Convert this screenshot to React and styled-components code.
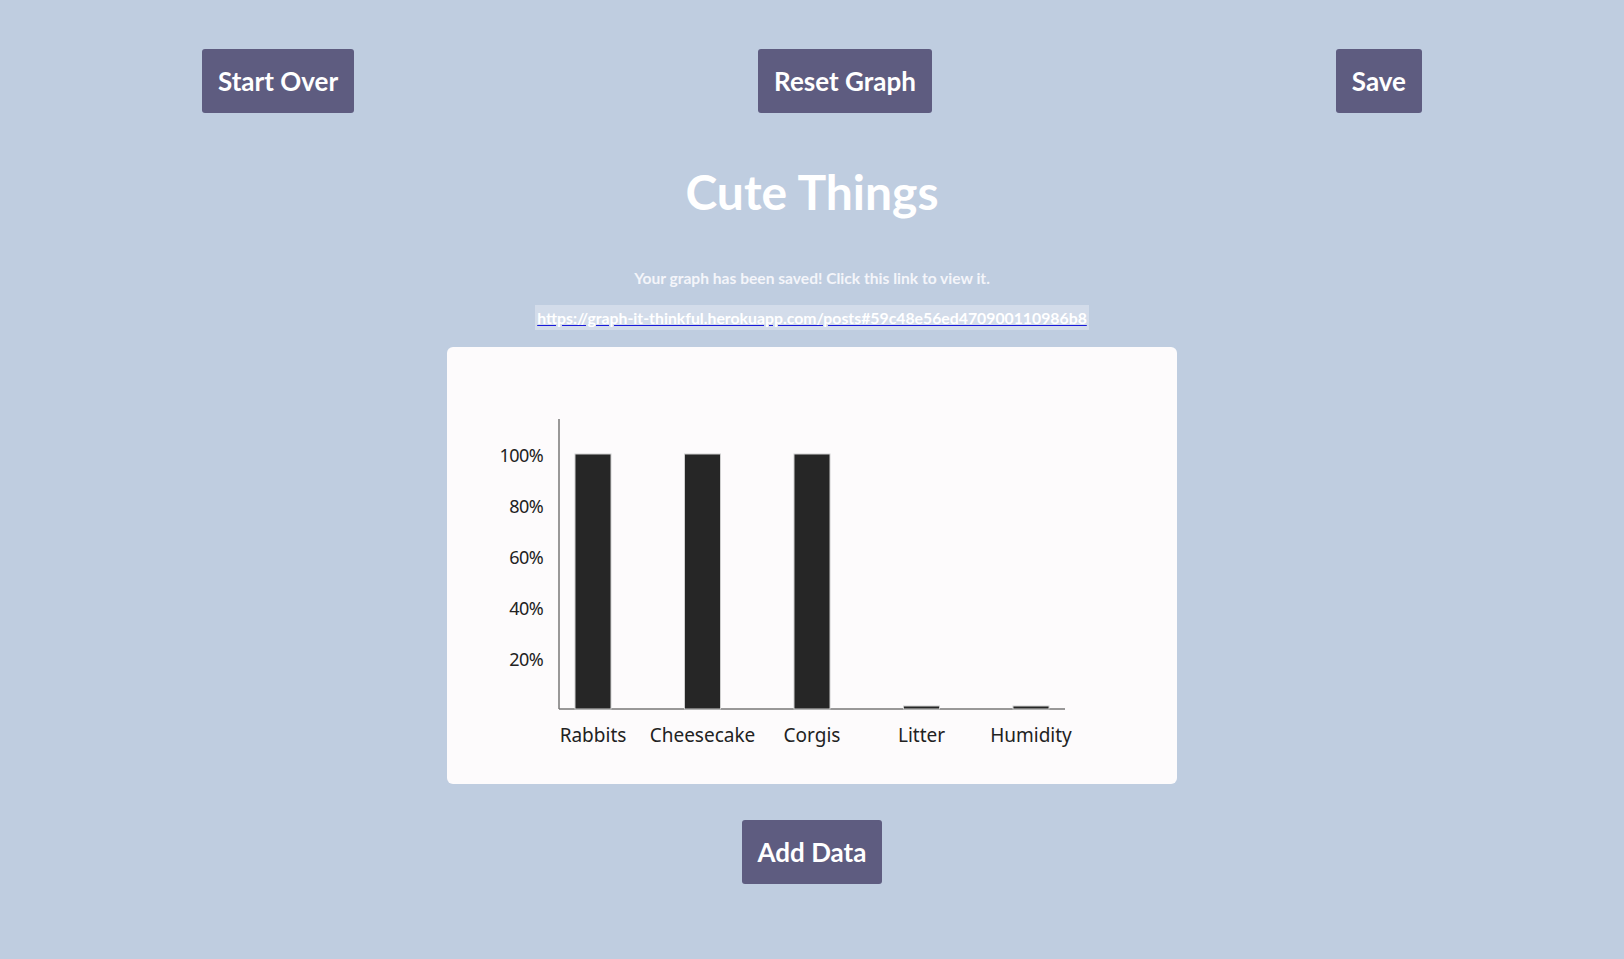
import React from 'react';
import styled, { createGlobalStyle } from 'styled-components';

const GlobalStyle = createGlobalStyle`
  body {
    margin: 0;
    background-color: #bfcde0;
    font-family: Lato, "Liberation Sans", sans-serif;
  }
`;

const data = [
  { label: 'Rabbits', value: 100 },
  { label: 'Cheesecake', value: 100 },
  { label: 'Corgis', value: 100 },
  { label: 'Litter', value: 1 },
  { label: 'Humidity', value: 1 },
];

const ticks = [100, 80, 60, 40, 20];

// chart geometry, in svg units
const AXIS_X = 112;
const AXIS_TOP = 72;
const BASE_Y = 362;
const FULL = 255;
const BAR_W = 36;
const STEP = 109.5;
const FIRST_BAR = 128;

const Graph = () => (
  <ChartSvg width="730" height="437" viewBox="0 0 730 437">
    <line x1={AXIS_X} y1={AXIS_TOP} x2={AXIS_X} y2={BASE_Y} className="axis" />
    <line x1={AXIS_X} y1={BASE_Y} x2={618} y2={BASE_Y} className="axis" />
    {ticks.map(t => (
      <text key={t} x={96} y={BASE_Y - (FULL * t) / 100 + 8} className="tick">
        {t}%
      </text>
    ))}
    {data.map((d, i) => {
      const x = FIRST_BAR + i * STEP;
      const h = Math.max((FULL * d.value) / 100, 3);
      return (
        <g key={d.label}>
          <rect x={x} y={BASE_Y - h} width={BAR_W} height={h} className="bar" />
          <text x={x + BAR_W / 2} y={BASE_Y + 33} className="label">
            {d.label}
          </text>
        </g>
      );
    })}
  </ChartSvg>
);

const App = () => (
  <Page>
    <GlobalStyle />
    <TopBar>
      <Button>Start Over</Button>
      <Button>Reset Graph</Button>
      <Button>Save</Button>
    </TopBar>
    <Title>Cute Things</Title>
    <SavedNote>Your graph has been saved! Click this link to view it.</SavedNote>
    <SavedLink href="#">
      https://graph-it-thinkful.herokuapp.com/posts#59c48e56ed470900110986b8
    </SavedLink>
    <Card>
      <Graph />
    </Card>
    <Button>Add Data</Button>
  </Page>
);

export default App;

const Page = styled.div`
  display: flex;
  flex-direction: column;
  align-items: center;
  min-height: 959px;
  padding-top: 49px;
  box-sizing: border-box;
`;

const TopBar = styled.div`
  width: 100%;
  display: flex;
  justify-content: space-around;
  align-items: center;
`;

const Button = styled.button`
  font-family: Lato, "Liberation Sans", sans-serif;
  font-weight: 700;
  font-size: 26px;
  line-height: 34px;
  color: #ffffff;
  background-color: #5e5c80;
  border: none;
  border-radius: 3px;
  padding: 15px 16px;
  cursor: pointer;
`;

const Title = styled.h1`
  margin: 50px 0 0;
  font-size: 48px;
  line-height: 58px;
  font-weight: 700;
  color: #ffffff;
`;

const SavedNote = styled.p`
  margin: 48px 0 0;
  font-size: 15.6px;
  line-height: 18px;
  font-weight: 700;
  color: #f4f5fa;
`;

const SavedLink = styled.a`
  margin-top: 18px;
  padding: 3px 2px;
  font-size: 15.8px;
  line-height: 19px;
  font-weight: 700;
  color: #ffffff;
  background-color: #d3dcea;
  text-decoration: underline;
  text-decoration-color: #1a1adb;
`;

const Card = styled.div`
  margin: 17px 0 36px;
  width: 730px;
  height: 437px;
  background-color: #fdfbfc;
  border-radius: 6px;
`;

const ChartSvg = styled.svg`
  display: block;
  .axis {
    stroke: #777777;
    stroke-width: 1.5;
  }
  .bar {
    fill: #262626;
    stroke: #cfcfcf;
    stroke-width: 1;
  }
  .tick {
    font-family: "Noto Sans", "Open Sans", sans-serif;
    font-size: 18px;
    letter-spacing: -0.6px;
    fill: #222222;
    text-anchor: end;
  }
  .label {
    font-family: "Noto Sans", "Open Sans", sans-serif;
    font-size: 19px;
    fill: #222222;
    text-anchor: middle;
  }
`;
